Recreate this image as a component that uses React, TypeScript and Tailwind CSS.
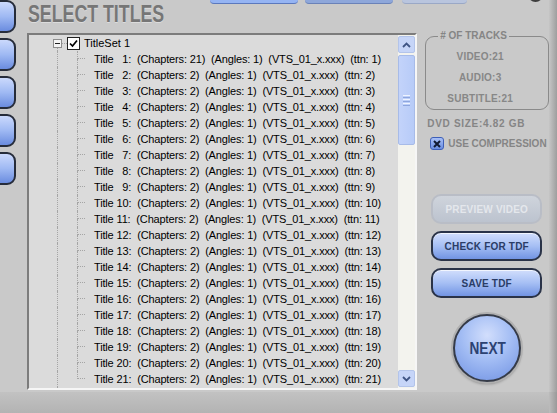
import React from "react";

const sans = { fontFamily: '"Liberation Sans", Arial, sans-serif' };

function Chevron({ up }: { up?: boolean }) {
  return (
    <svg width="9" height="6" viewBox="0 0 9 6">
      <path d={up ? "M1 5 L4.5 1.5 L8 5" : "M1 1 L4.5 4.5 L8 1"} fill="none" stroke="#3f5585" strokeWidth="1.8" />
    </svg>
  );
}

function TreeRow({ i, last }: { i: number; last: boolean }) {
  const ch = i === 1 ? 21 : 2;
  const label = `Title ${i < 10 ? "  " : ""}${i}:  (Chapters: ${ch})  (Angles: 1)  (VTS_01_x.xxx)  (ttn: ${i})`;
  return (
    <div className="flex h-4 items-stretch">
      <div className="w-[28px]" />
      <div className="w-[20px] border-l border-dotted border-[#a5a5a5]" />
      <div className="flex w-[17px] flex-col">
        <div className="h-[8px] w-[8px] border-b border-l border-dotted border-[#a5a5a5]" />
        <div className={last ? "flex-1" : "flex-1 border-l border-dotted border-[#a5a5a5]"} />
      </div>
      <span className="whitespace-pre text-[11px] leading-4 tracking-[-0.15px] text-black">{label}</span>
    </div>
  );
}

function BlueButton({ label, disabled }: { label: string; disabled?: boolean }) {
  return (
    <div
      className={
        disabled
          ? "flex h-[30px] w-[111px] items-center justify-center rounded-[10px] border-2 border-[#b9bdc6] bg-gradient-to-b from-[#cfd4dc] to-[#bcc3cf]"
          : "flex h-[30px] w-[111px] items-center justify-center rounded-[10px] border-2 border-[#2a3348] bg-gradient-to-b from-[#d2defc] via-[#a6bff4] to-[#7294e3] shadow-[inset_0_1px_0_rgba(255,255,255,0.7)]"
      }
    >
      <span
        className={
          disabled
            ? "text-[10px] font-bold tracking-[0.2px] text-[#e4e7ec]"
            : "text-[10px] font-bold tracking-[0.2px] text-[#2a3d66]"
        }
      >
        {label}
      </span>
    </div>
  );
}

export default function App() {
  const titles = Array.from({ length: 21 }, (_, k) => k + 1);
  return (
    <div className="relative flex h-[413px] w-[557px] flex-col overflow-hidden bg-[#c9c9c9]" style={sans}>
      {/* cropped top tabs */}
      <div className="absolute left-[210px] top-0 h-[4px] w-[88px] rounded-b-[6px] border-b border-[#5b78bd] bg-[#95b4f3]" />
      <div className="absolute left-[305px] top-0 h-[4px] w-[88px] rounded-b-[6px] border-b border-[#6a82b8] bg-[#8ea7da]" />
      <div className="absolute left-[402px] top-0 h-[4px] w-[65px] rounded-b-[6px] border-b border-[#9aa8c6] bg-[#b9c5de]" />
      <div className="absolute left-[528px] top-[-13px] h-[15px] w-[15px] rounded-full bg-[#3d3d3d]" />

      <div className="flex h-[392px]">
        {/* left buttons */}
        <div className="flex w-[16px] flex-col gap-[5px] overflow-hidden">
          {[0, 1, 2, 3, 4].map((n) => (
            <div
              key={n}
              className="-ml-[14px] h-[33px] w-[30px] shrink-0 rounded-[9px] border-2 border-[#262c3a] bg-gradient-to-b from-[#cbd9fc] via-[#9fb9f3] to-[#6b8cdf]"
            />
          ))}
        </div>

        {/* middle */}
        <div className="ml-[11px] flex w-[391px] flex-col">
          <div className="flex h-[33px] items-start pl-[1px]">
            <span className="mt-[1px] inline-block origin-left scale-x-[0.74] whitespace-nowrap text-[24px] font-bold leading-[26px] text-[#767676] [text-shadow:0_1px_0_#dcdcdc]">
              SELECT TITLES
            </span>
          </div>
          <div className="flex h-[357px] border-2 border-b-[#f6f6f6] border-l-[#7c7c7c] border-r-[#f6f6f6] border-t-[#7c7c7c] bg-[#dbdbdb]">
            <div className="flex-1 overflow-hidden">
              <div className="flex h-4 items-stretch">
                <div className="w-[24px]" />
                <div className="flex w-[9px] flex-col items-center">
                  <div className="flex-1" />
                  <div className="flex h-[9px] w-[9px] items-center justify-center border border-[#8d8d8d] bg-[#f4f4f4]">
                    <div className="h-px w-[5px] bg-[#222]" />
                  </div>
                  <div className="w-0 flex-1 border-l border-dotted border-[#a5a5a5]" />
                </div>
                <div className="flex w-[5px] items-center">
                  <div className="w-full border-t border-dotted border-[#a5a5a5]" />
                </div>
                <div className="flex items-center">
                  <div className="flex h-[13px] w-[13px] items-center justify-center border border-[#222] bg-white">
                    <svg width="9" height="9" viewBox="0 0 9 9">
                      <path d="M1 4.5 L3.5 7 L8 1.5" fill="none" stroke="#000" strokeWidth="1.7" />
                    </svg>
                  </div>
                </div>
                <span className="ml-[4px] whitespace-pre text-[11px] leading-4 text-black">TitleSet 1</span>
              </div>
              {titles.map((i) => (
                <TreeRow key={i} i={i} last={i === 21} />
              ))}
              <div className="flex h-full items-stretch">
                <div className="w-[28px]" />
                <div className="w-[20px] border-l border-dotted border-[#a5a5a5]" />
              </div>
            </div>
            {/* scrollbar */}
            <div className="flex w-[17px] flex-col bg-[#f3f3ee] py-px">
              <div className="flex h-[17px] items-center justify-center rounded-[2px] border border-[#b3c4ea] bg-[#c6d5f8]">
                <Chevron up />
              </div>
              <div className="mt-[2px] flex h-[90px] flex-col items-center justify-center gap-px rounded-[2px] border border-[#a7bbe8] bg-gradient-to-r from-[#c3d3fa] to-[#b7cbf8]">
                <div className="h-px w-[7px] bg-[#eef3ff]" />
                <div className="h-px w-[7px] bg-[#8ea6de]" />
                <div className="h-px w-[7px] bg-[#eef3ff]" />
                <div className="h-px w-[7px] bg-[#8ea6de]" />
                <div className="h-px w-[7px] bg-[#eef3ff]" />
                <div className="h-px w-[7px] bg-[#8ea6de]" />
              </div>
              <div className="flex-1" />
              <div className="flex h-[17px] items-center justify-center rounded-[2px] border border-[#b3c4ea] bg-[#c6d5f8]">
                <Chevron />
              </div>
            </div>
          </div>
        </div>

        {/* right panel */}
        <div className="ml-[8px] flex w-[124px] flex-col pt-[36px]">
          <div className="relative h-[74px] rounded-[9px] border border-[#8a8a8a] pt-[9px]">
            <span className="absolute left-[12px] top-[-7px] bg-[#c9c9c9] px-[2px] text-[10px] font-bold leading-[12px] text-[#858585]">
              # OF TRACKS
            </span>
            {["VIDEO:21", "AUDIO:3", "SUBTITLE:21"].map((t) => (
              <div
                key={t}
                className="flex h-[21px] items-center justify-center pr-[14px] text-[10px] font-bold tracking-[0.2px] text-[#878787]"
              >
                {t}
              </div>
            ))}
          </div>
          <div className="mt-[8px] h-[12px] pl-[2px] text-[10px] font-bold leading-[12px] tracking-[0.7px] text-[#858585]">
            DVD SIZE:4.82 GB
          </div>
          <div className="mt-[7px] flex h-[13px] items-center pl-[5px]">
            <div className="flex h-[13px] w-[14px] shrink-0 items-center justify-center rounded-[3px] border border-[#3e5fb8] bg-gradient-to-b from-[#a9c0f6] to-[#6a8de0]">
              <svg width="8" height="8" viewBox="0 0 8 8">
                <path d="M1 1 L7 7 M7 1 L1 7" stroke="#111a33" strokeWidth="2" />
              </svg>
            </div>
            <span className="ml-[4px] whitespace-nowrap text-[10px] font-bold leading-[13px] text-[#858585]">
              USE COMPRESSION
            </span>
          </div>
          <div className="ml-[6px] mt-[44px] flex flex-col gap-[7px]">
            <BlueButton label="PREVIEW VIDEO" disabled />
            <BlueButton label="CHECK FOR TDF" />
            <BlueButton label="SAVE TDF" />
          </div>
          <div className="ml-[28px] mt-[16px] flex h-[68px] w-[68px] items-center justify-center rounded-full border-2 border-[#353b48] bg-[radial-gradient(circle_at_50%_30%,#d2defc_0%,#a3bdf4_45%,#6f91e2_100%)] shadow-[0_0_0_2px_#b0b0b0,0_2px_3px_rgba(0,0,0,0.35)]">
            <span className="inline-block scale-x-[0.8] text-[17px] font-bold leading-none text-[#2c4272]">
              NEXT
            </span>
          </div>
        </div>
        <div className="ml-auto w-[8px] bg-gradient-to-r from-[#c6c6c6] to-[#9e9e9e]" />
      </div>
      <div className="flex flex-1">
        <div className="flex-1 bg-gradient-to-b from-[#c2c2c2] to-[#b3b3b3]" />
        <div className="w-[8px] bg-gradient-to-r from-[#bcbcbc] to-[#999999]" />
      </div>
    </div>
  );
}
